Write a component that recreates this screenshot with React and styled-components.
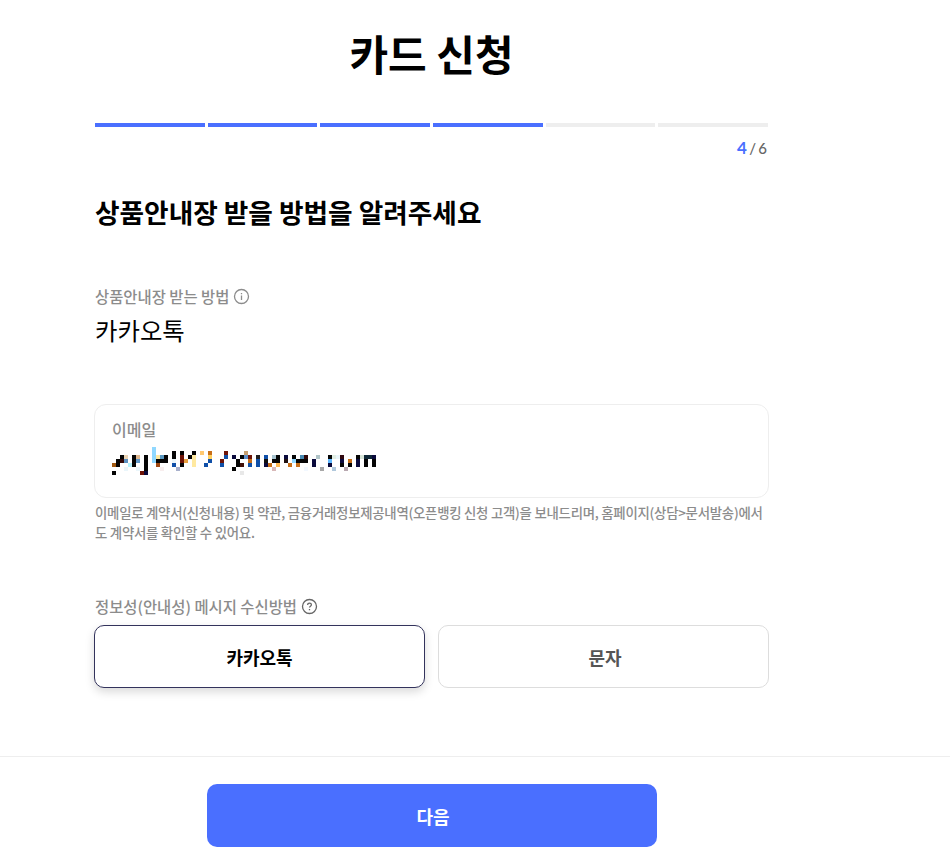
import React from "react";
import styled, { createGlobalStyle } from "styled-components";

const GlobalStyle = createGlobalStyle`
  html, body {
    margin: 0;
    padding: 0;
    background: #fff;
    font-family: "Noto Sans CJK KR", "Noto Sans", sans-serif;
    color: #000;
  }
`;

const Page = styled.div`
  width: 950px;
  height: 867px;
  overflow: hidden;
`;

const Column = styled.main`
  width: 673px;
  margin-left: 95px;
`;

const Title = styled.h1`
  margin: 0;
  height: 123px;
  padding-top: 22px;
  box-sizing: border-box;
  font-size: 42px;
  line-height: 61px;
  font-weight: 700;
  text-align: center;
`;

const Steps = styled.div`
  display: grid;
  grid-template-columns: repeat(6, 1fr);
  gap: 3px;
`;

const Step = styled.div`
  height: 4px;
  background: ${(p) => (p.$done ? "#4a6fff" : "#eeeeee")};
`;

const Counter = styled.div`
  height: 22px;
  margin-top: 10px;
  padding-right: 1px;
  text-align: right;
  font-family: "Lato", sans-serif;
  font-size: 15px;
  line-height: 22px;
  font-weight: 500;
  word-spacing: -1.5px;
  color: #666;
  b {
    color: #4a6fff;
    font-size: 17px;
    font-weight: 700;
  }
`;

const Heading = styled.h2`
  margin: 33px 0 0;
  font-size: 26.7px;
  line-height: 40px;
  font-weight: 700;
`;

const Label = styled.div`
  display: flex;
  align-items: center;
  gap: 4px;
  font-size: 15.4px;
  line-height: 22px;
  font-weight: 500;
  color: #8c8c8c;
  margin-top: ${(p) => p.$top}px;
`;

const Value = styled.div`
  font-size: 24.4px;
  line-height: 34px;
  margin-top: 6px;
`;

const EmailBox = styled.div`
  box-sizing: border-box;
  margin: 57px 0 0 -1px;
  width: 675px;
  height: 94px;
  padding: 14px 17px;
  border: 1px solid #eeeeee;
  border-radius: 12px;
`;

const EmailLabel = styled.div`
  font-size: 16px;
  line-height: 20px;
  font-weight: 500;
  color: #8c8c8c;
`;

const Mosaic = styled.svg`
  display: block;
  margin-top: 8px;
`;

const Note = styled.p`
  margin: 4px 0 0;
  font-size: 13.4px;
  line-height: 20px;
  font-weight: 500;
  color: #8c8c8c;
  letter-spacing: -0.25px;
`;

const Choices = styled.div`
  display: grid;
  grid-template-columns: 331px 331px;
  gap: 13px;
  margin: 8px 0 0 -1px;
`;

const Choice = styled.button`
  height: 63px;
  border-radius: 10px;
  background: #fff;
  font-family: inherit;
  font-size: 18px;
  font-weight: 700;
  padding: 0 ${(p) => (p.$on ? 0 : "0 0 3px")};
  color: ${(p) => (p.$on ? "#000" : "#555")};
  border: 1px solid ${(p) => (p.$on ? "#33335c" : "#dddddd")};
  box-shadow: ${(p) => (p.$on ? "0 4px 10px rgba(0,0,0,0.15)" : "none")};
`;

const Footer = styled.footer`
  margin-top: 68px;
  border-top: 1px solid #eeeeee;
  padding-top: 27px;
  display: flex;
  justify-content: center;
  padding-right: 86px;
`;

const NextButton = styled.button`
  width: 450px;
  height: 63px;
  border: 0;
  border-radius: 10px;
  background: #4a6fff;
  color: #fff;
  font-family: inherit;
  font-size: 18px;
  font-weight: 700;
  padding: 0 0 0 2px;
`;

const HintIcon = ({ mark }) => (
  <svg
    width="17"
    height="17"
    viewBox="0 0 17 17"
    fill="none"
    stroke={mark === "i" ? "#8c8c8c" : "#666"}
    strokeWidth="1.3"
  >
    <circle cx="8.5" cy="8.5" r="7" />
    {mark === "i" ? (
      <path d="M8.5 7.5v4.5M8.5 5v1.2" />
    ) : (
      <path d="M6.6 6.9c0-1 .9-1.7 1.9-1.7s1.9.7 1.9 1.6c0 1.4-1.9 1.4-1.9 2.8M8.5 11v1.2" />
    )}
  </svg>
);

// the address is blurred out in the picture: [column, colour] per 4px row
const K = "#050505";
const N = "#0a0a3c";
const R = "#6e1408";
const B = "#1050a8";
const L = "#90d8ff";
const O = "#c86f18";
const Y = "#ffe9a0";
const P = "#eaf6fb";
const mosaicRows = [
  [[10, L]],
  [[10, L], [15, K], [17, K], [20, K], [22, "#ffc870"], [24, O], [28, R], [33, "#c8a070"]],
  [
    [2, K], [3, "#ecd4b4"], [5, K], [6, "#e0b890"], [8, K], [10, L], [11, Y], [12, "#5a98c0"], [13, K],
    [15, K], [17, R], [19, K], [20, Y], [24, "#ffd060"], [28, B], [30, N], [32, K], [33, "#6090c8"], [34, R],
    [36, "#202020"], [38, B], [40, "#a8c4d0"], [41, K], [43, N], [45, K], [47, "#4888b0"], [48, "#300808"],
    [51, "#b0c4c8"], [54, K], [55, "#e0eee4"], [56, P], [57, "#300810"], [61, K], [62, "#d8e4d8"], [63, "#102838"], [64, "#102838"], [65, N],
  ],
  [
    [1, K], [2, "#300808"], [3, "#5a90c0"], [5, K], [6, "#6098c8"], [8, K], [10, L], [11, K], [12, K], [13, K],
    [15, P], [17, R], [18, "#e8a040"], [20, Y], [24, B], [27, R], [31, K], [34, O],
    [36, B], [38, "#101010"], [40, K], [41, K], [43, "#201010"], [45, L], [46, K], [47, K], [48, K],
    [50, N], [54, "#60b8ff"], [57, N], [59, O], [61, N], [63, K], [65, K],
  ],
  [
    [0, "#a05810"], [1, K], [4, "#b8f4ff"], [5, K], [8, K], [11, "#a04810"], [15, B], [17, K], [20, Y],
    [23, B], [27, B], [31, K], [32, "#401008"], [34, B], [36, B], [38, N], [39, O], [41, "#ffb850"],
    [44, O], [46, O], [50, N], [54, N], [57, K], [59, K], [61, N], [63, K], [65, K],
  ],
  [
    [3, P], [6, P], [8, K], [12, "#f8eeee"], [16, "#a8b0cc"], [30, K], [40, "#d8b8b8"], [48, "#f2f8ff"],
    [52, "#a8a8a8"], [55, "#b0c8dc"], [58, "#b8a8b0"],
  ],
  [[0, K], [7, R], [8, N], [32, "#e8e8e8"]],
];

export default function App() {
  return (
    <Page>
      <GlobalStyle />
      <Column>
        <Title>카드 신청</Title>
        <Steps>
          {[1, 2, 3, 4, 5, 6].map((n) => (
            <Step key={n} $done={n <= 4} />
          ))}
        </Steps>
        <Counter>
          <b>4</b> / 6
        </Counter>
        <Heading>상품안내장 받을 방법을 알려주세요</Heading>
        <Label $top={53}>
          상품안내장 받는 방법 <HintIcon mark="i" />
        </Label>
        <Value>카카오톡</Value>
        <EmailBox>
          <EmailLabel>이메일</EmailLabel>
          <Mosaic width="268" height="28" shapeRendering="crispEdges">
            {mosaicRows.map((row, r) =>
              row.map(([k, color]) => (
                <rect key={`${r}-${k}`} x={k * 4} y={r * 4} width="4" height="4" fill={color} />
              ))
            )}
          </Mosaic>
        </EmailBox>
        <Note>
          이메일로 계약서(신청내용) 및 약관, 금융거래정보제공내역(오픈뱅킹 신청 고객)을 보내드리며, 홈페이지(상담&gt;문서발송)에서도 계약서를 확인할 수 있어요.
        </Note>
        <Label $top={53}>
          정보성(안내성) 메시지 수신방법 <HintIcon mark="?" />
        </Label>
        <Choices>
          <Choice $on>카카오톡</Choice>
          <Choice>문자</Choice>
        </Choices>
      </Column>
      <Footer>
        <NextButton>다음</NextButton>
      </Footer>
    </Page>
  );
}
